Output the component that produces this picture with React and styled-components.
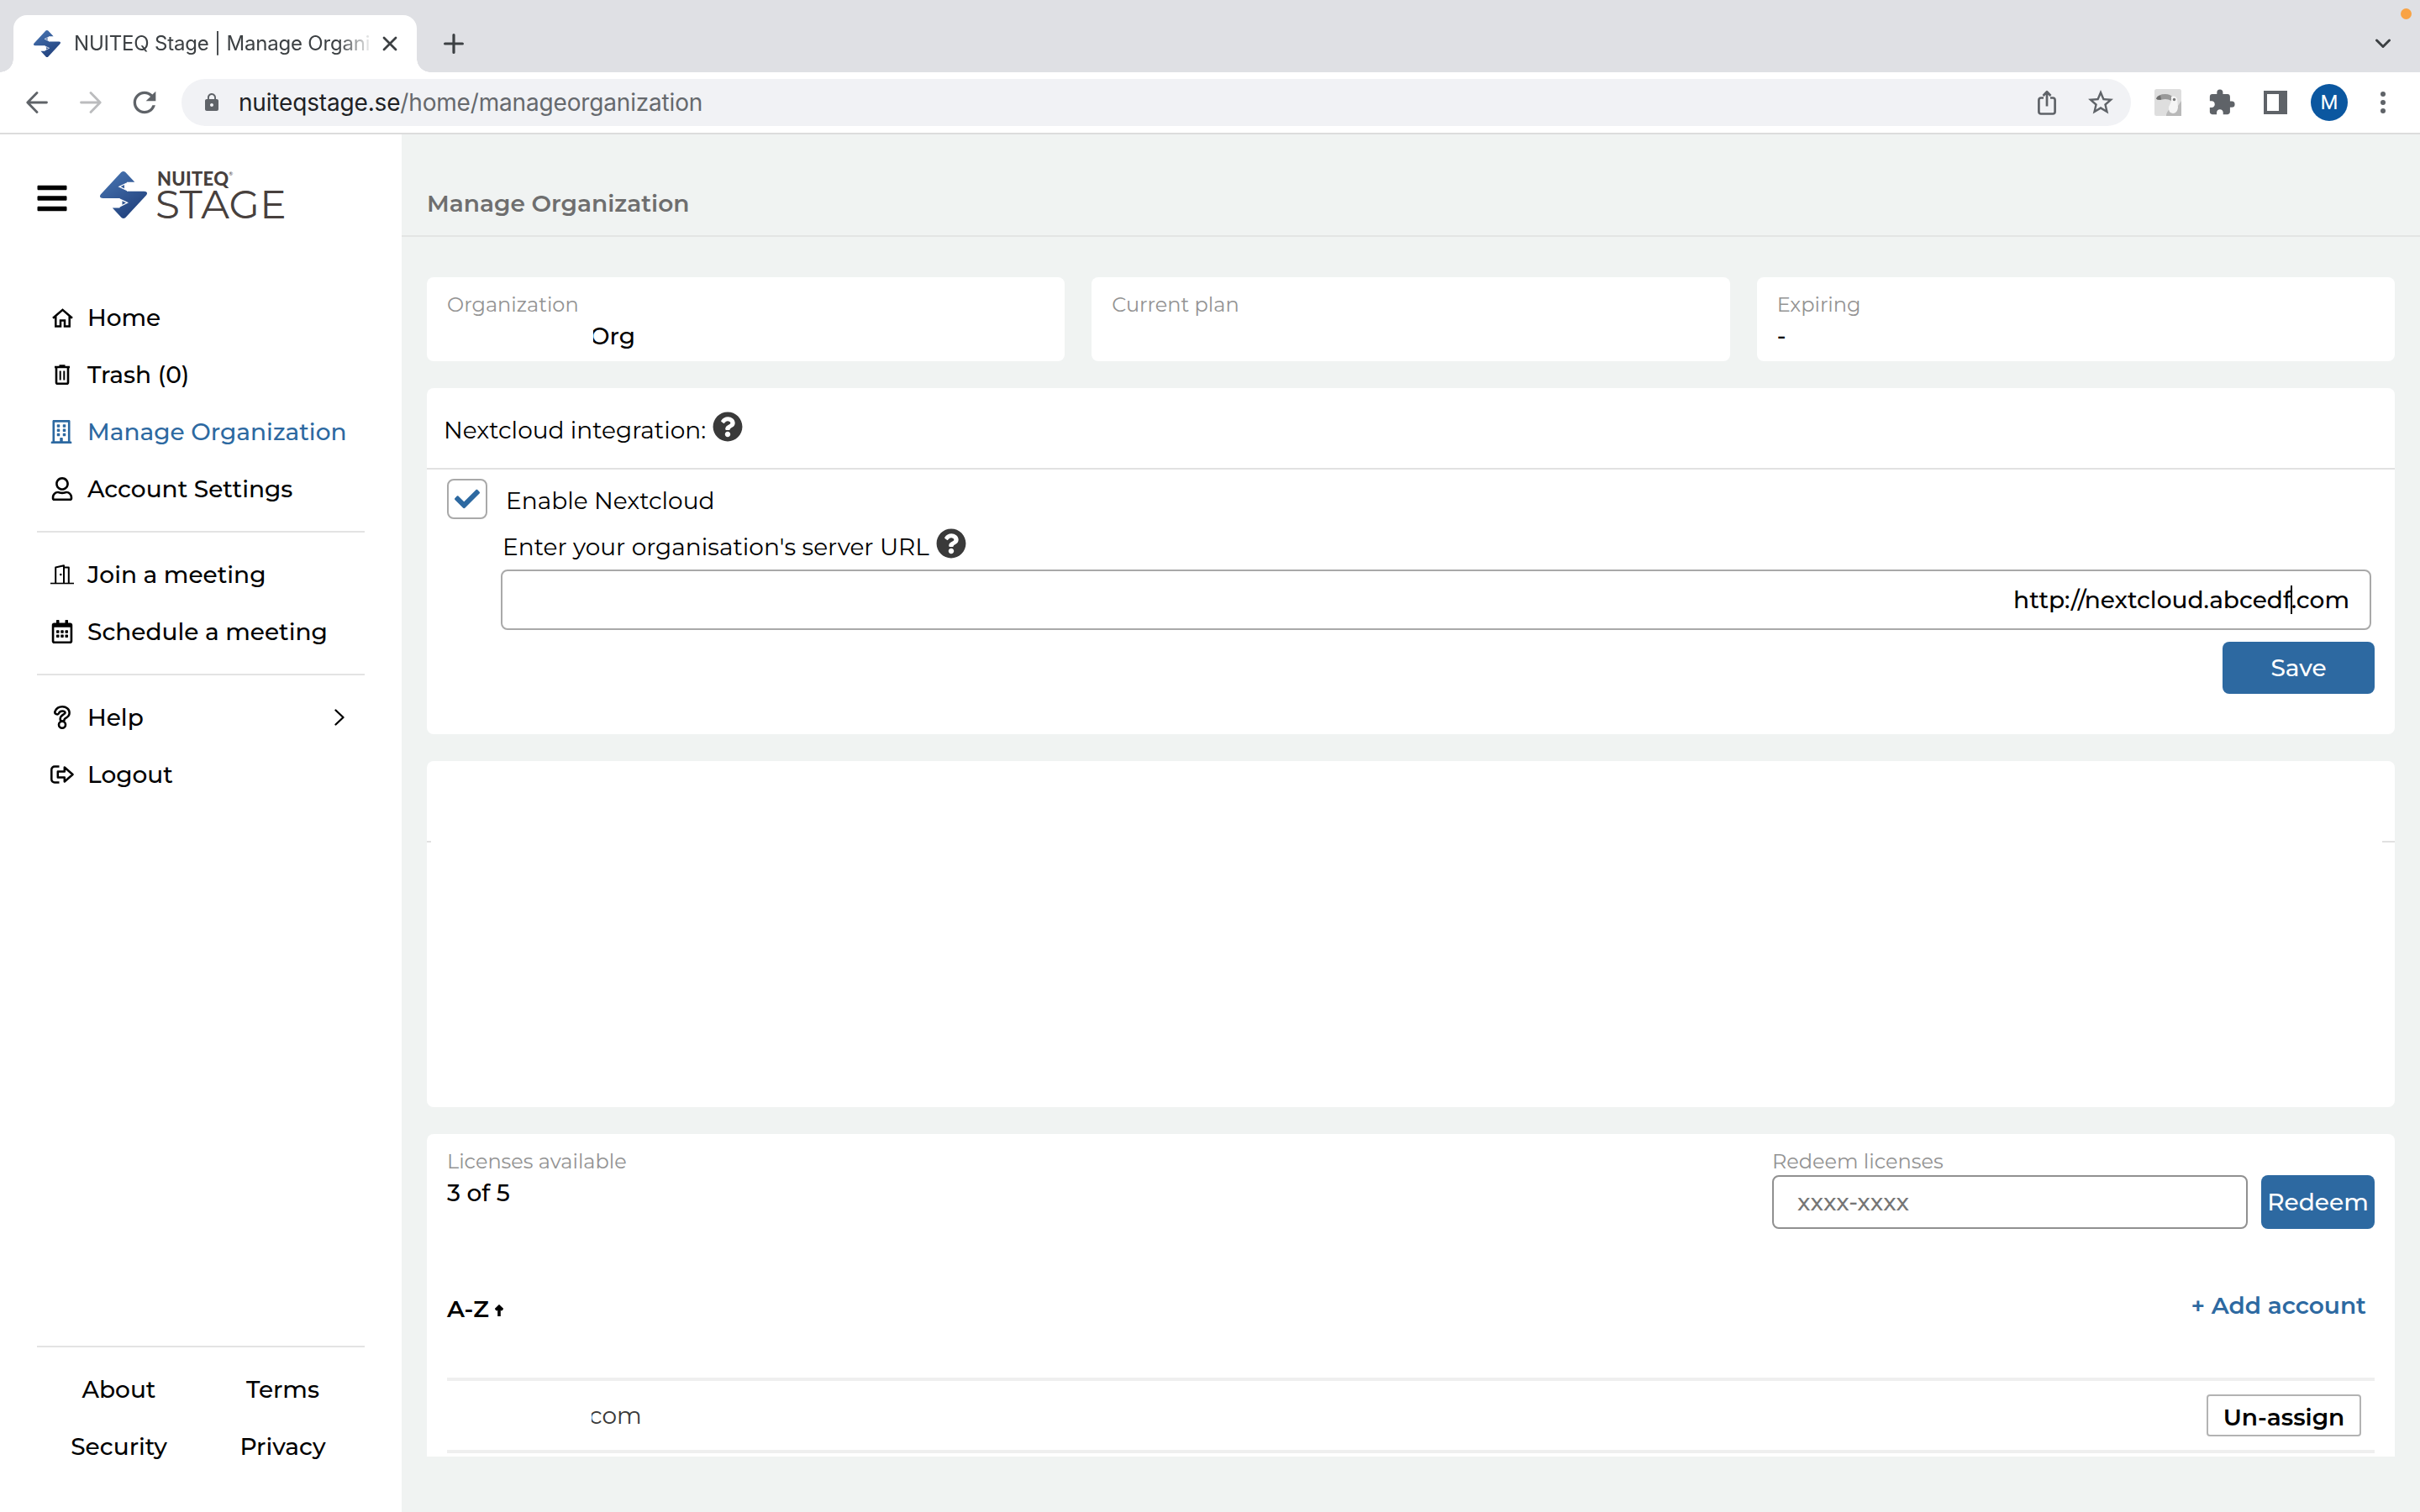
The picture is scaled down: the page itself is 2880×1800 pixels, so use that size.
import styled, {createGlobalStyle, css} from "styled-components";
import {FaBars, FaCheck, FaQuestionCircle, FaRegBuilding, FaRegCalendarAlt, FaRegUser} from "react-icons/fa";
import {MdExtension, MdLock, MdRefresh, MdStarBorder} from "react-icons/md";

const GlobalStyle = createGlobalStyle`
  * {
    box-sizing: border-box;
  }

  body {
    margin: 0;
    background: #f0f3f2;
    color: #000;
    font: 500 28px/40px Montserrat, "Open Sans", sans-serif;
  }

  svg {
    display: block;
    flex: none;
  }
`;

/* ---------- browser chrome ---------- */

const Chrome = styled.header`
  height: 160px;
  background: #fff;
  border-bottom: 2px solid #dcdcdc;
  font-family: Inter, Roboto, sans-serif;
  font-weight: 400;
`;

const TabStrip = styled.div`
  position: relative;
  display: flex;
  align-items: flex-end;
  height: 86px;
  padding-left: 16px;
  background: #dfe0e4;
`;

const Tab = styled.div`
  position: relative;
  display: flex;
  align-items: center;
  width: 480px;
  height: 68px;
  padding: 0 22px 0 24px;
  border-radius: 16px 16px 0 0;
  background: #fff;

  &::before,
  &::after {
    content: "";
    position: absolute;
    bottom: 0;
    width: 16px;
    height: 16px;
  }

  &::before {
    left: -16px;
    background: radial-gradient(circle at 0 0, transparent 15.5px, #fff 16px);
  }

  &::after {
    right: -16px;
    background: radial-gradient(circle at 100% 0, transparent 15.5px, #fff 16px);
  }
`;

const TabTitle = styled.div`
  width: 352px;
  margin: 0 15px 0 16px;
  overflow: hidden;
  white-space: nowrap;
  font-size: 24px;
  letter-spacing: -0.2px;
  color: #3c4043;
  mask-image: linear-gradient(to right, #000 315px, transparent 356px);
`;

const NewTab = styled.div`
  margin: 0 0 22px 32px;
`;

const TabSearch = styled.div`
  margin: 0 35px 28px auto;
`;

const RecordingDot = styled.div`
  position: absolute;
  top: 10px;
  right: 10px;
  width: 13px;
  height: 13px;
  border-radius: 50%;
  background: #f9a344;
`;

const Toolbar = styled.div`
  display: flex;
  align-items: center;
  height: 72px;
  color: #5f6368;
`;

const NavButtons = styled.div`
  display: flex;
  align-items: center;
  width: 216px;
  padding-left: 31px;
  gap: 38px;

  svg:last-child {
    margin-left: -7px;
  }
`;

const AddressBar = styled.div`
  display: flex;
  align-items: center;
  width: 2320px;
  height: 56px;
  padding: 0 18px 0 24px;
  border-radius: 28px;
  background: #f1f2f5;
`;

const Url = styled.div`
  flex: 1;
  margin-left: 20px;
  letter-spacing: -0.17px;
  color: #66696d;

  b {
    font-weight: 400;
    color: #202124;
  }
`;

const ShareIcon = styled.svg`
  margin-right: 35px;
`;

const Extensions = styled.div`
  display: flex;
  align-items: center;
  flex: 1;
  padding-left: 28px;
`;

const PuzzleIcon = styled(MdExtension)`
  margin: 0 33px 0 31px;
`;

const Avatar = styled.div`
  width: 44px;
  height: 44px;
  margin: 0 39px 0 28px;
  border-radius: 50%;
  background: #0b57a0;
  color: #fff;
  font: 400 24px/45px Roboto, sans-serif;
  text-align: center;
`;

/* ---------- page ---------- */

const Page = styled.div`
  display: flex;
  height: 1640px;
`;

const Sidebar = styled.aside`
  display: flex;
  flex-direction: column;
  width: 478px;
  padding: 0 44px 44px;
  background: #fff;
`;

const Brand = styled.div`
  display: flex;
  height: 184px;
  padding-top: 44px;
`;

const MenuIcon = styled(FaBars)`
  margin: 12px 37px 0 -2px;
`;

const Wordmark = styled.div`
  margin-left: 12px;
  color: #47403d;
`;

const WordmarkTop = styled.div`
  display: flex;
  height: 20px;
  font: 900 22px/18px Lato, sans-serif;
  letter-spacing: 0.3px;

  sup {
    margin-top: -5px;
    font: 400 6px/16px Lato, sans-serif;
  }
`;

const WordmarkBottom = styled.div`
  margin-left: -2px;
  font-size: 47px;
  font-weight: 400;
  line-height: 40px;
  letter-spacing: 0.2px;
`;

const NavItem = styled.a`
  display: flex;
  align-items: center;
  height: 68px;
  padding: 0 24px 0 16px;
  white-space: nowrap;
  color: ${p => (p.$active ? "#2d69a1" : "#000")};
`;

const NavIcon = styled.span`
  display: flex;
  justify-content: center;
  flex: none;
  width: 28px;
  margin-right: 16px;
  ${p => p.$shift && css`padding-right: 3px;`}
`;

const NavLabel = styled.span`
  flex: 1;
`;

const Divider = styled.div`
  height: 2px;
  margin: 16px 0;
  background: #e3e3e3;
`;

const Legal = styled.div`
  margin-top: auto;
`;

const LegalLinks = styled.div`
  display: grid;
  grid-template-columns: 1fr 1fr;
  grid-auto-rows: 68px;
  align-items: center;
  text-align: center;
`;

const Main = styled.main`
  flex: 1;
`;

const TitleBar = styled.div`
  display: flex;
  align-items: center;
  height: 122px;
  padding: 43px 30px 0;
  border-bottom: 2px solid #e3e5e4;
  color: #6e6e6e;
  font-weight: 600;
`;

const Content = styled.div`
  display: flex;
  flex-direction: column;
  gap: 32px;
  padding: 48px 30px 0;
`;

const Cards = styled.div`
  display: grid;
  grid-template-columns: repeat(3, 1fr);
  gap: 32px;
`;

const Card = styled.section`
  height: 100px;
  padding: 16px 24px 0;
  border-radius: 8px;
  background: #fff;
`;

const Caption = styled.div`
  font-size: 24px;
  font-weight: 400;
  line-height: 34px;
  color: #939393;
`;

/* the start of the value is blanked out */
const Clipped = styled.div`
  width: 80px;
  margin-left: ${p => p.$from}px;
  overflow: hidden;
  text-indent: ${p => p.$indent}px;
`;

const Panel = styled.section`
  height: 412px;
  border-radius: 8px;
  background: #fff;
`;

const PanelHeader = styled.div`
  display: flex;
  align-items: center;
  height: 97px;
  padding-left: 20px;
  border-bottom: 2px solid #e1e1e1;
  font-weight: 400;
`;

const HelpIcon = styled(FaQuestionCircle).attrs({size: 36, color: "#3a3a3a"})`
  margin: 0 0 ${p => p.$lift}px 8px;
`;

const HeaderText = styled.span`
  margin-top: 5px;
`;

const CheckRow = styled.label`
  display: flex;
  gap: 22px;
  padding: 11px 24px 0;
  font-weight: 400;

  span {
    padding-top: 6px;
  }
`;

const CheckBox = styled.div`
  display: flex;
  align-items: center;
  justify-content: center;
  width: 48px;
  height: 48px;
  border: 2px solid #a9a9a9;
  border-radius: 8px;
  color: #2d69a1;
`;

const UrlLabel = styled.div`
  display: flex;
  align-items: center;
  height: 60px;
  padding-left: 90px;
  font-weight: 400;

  span {
    margin-top: 6px;
  }
`;

const Field = styled.div`
  display: flex;
  align-items: center;
  border: 2px solid #a9a9a9;
  border-radius: 8px;
`;

const UrlField = styled(Field)`
  justify-content: flex-end;
  height: 72px;
  margin: 0 28px 0 88px;
  padding-right: 24px;
`;

const Caret = styled.i`
  width: 2px;
  height: 34px;
  margin: 0 -1px;
  background: #000;
`;

const Button = styled.button`
  display: block;
  width: ${p => p.$w}px;
  height: ${p => p.$h}px;
  padding: 0;
  border: 0;
  border-radius: 8px;
  background: #2d69a1;
  color: #fff;
  font: inherit;
`;

const SaveButton = styled(Button)`
  margin: 14px 24px 0 auto;
`;

/* only the two ends of the header rule are left */
const BlankHeader = styled.div`
  display: flex;
  justify-content: space-between;
  padding-top: 95px;

  i {
    width: 5px;
    height: 2px;
    background: #e1e1e1;
  }

  i + i {
    width: 15px;
  }
`;

const Licenses = styled.section`
  height: 384px;
  padding: 16px 24px 0;
  border-radius: 8px 8px 0 0;
  background: #fff;
`;

const LicensesTop = styled.div`
  display: flex;
  justify-content: space-between;
  height: 97px;
`;

const RedeemCaption = styled(Caption)`
  margin-left: 1px;
`;

const RedeemRow = styled.div`
  display: flex;
  gap: 16px;
  margin: -1px 0 0 1px;
`;

const CodeField = styled(Field)`
  width: 566px;
  height: 64px;
  padding-left: 28px;
  border-color: #909090;
  color: #757575;
`;

const SortRow = styled.div`
  display: flex;
  align-items: center;
  justify-content: space-between;
  height: 177px;
  font-weight: 600;
`;

const Sort = styled.div`
  display: flex;
  align-items: center;
  gap: 7px;
  padding-top: 13px;

  svg {
    margin-top: 4px;
  }
`;

const AddAccount = styled.a`
  padding: 5px 10px 0 0;
  color: #2d69a1;
`;

const AccountRow = styled.div`
  display: flex;
  align-items: center;
  justify-content: space-between;
  height: 90px;
  border: solid #efefef;
  border-width: 4px 0;
  color: #3a3a3a;
  font-weight: 400;
`;

const UnassignButton = styled.button`
  width: 184px;
  height: 50px;
  margin-right: 16px;
  padding: 4px 0 0;
  border: 2px solid #b3b3b3;
  border-radius: 4px;
  background: #fff;
  color: #000;
  font: inherit;
  font-weight: 600;
`;

/* ---------- drawings ---------- */

const LogoMark = ({size}) => (
  <svg width={size} height={size} viewBox="0 0 56 56">
    <defs>
      <linearGradient id="mark" x1="0" y1="0" x2="0.6" y2="1">
        <stop offset="0" stopColor="#4a78b5"/>
        <stop offset="1" stopColor="#23437f"/>
      </linearGradient>
    </defs>
    <path
      fill="url(#mark)"
      d="M25.3 1Q27.8-.9 30.3 1L41.3 12.7H32V23.7H52.500Q58 24.200 55 28.500L30.400 55Q28 56.900 25.500 55L14.800 43.500H23.500V32H3.500Q-2 31.500 1 27.200Z"
    />
    <path fill="none" stroke="#fff" strokeWidth="1.300" d="M33 13.500L23 18.200 33 23M22.500 32.700L32.500 37.300 22.500 42.500"/>
    <path fill="#fff" d="M33 13.500l-4 1.900v5.300l4 2.300zM22.500 32.700l4 1.900v5.700l-4 2.200z"/>
  </svg>
);

const Line = ({w, h, sw = 2.6, children, ...rest}) => (
  <svg
    width={w}
    height={h}
    viewBox={`0 0 ${w} ${h}`}
    fill="none"
    stroke="currentColor"
    strokeWidth={sw}
    strokeLinejoin="round"
    {...rest}
  >
    {children}
  </svg>
);

const HomeIcon = () => (
  <Line w={25} h={23} sw={2.5} strokeLinejoin="miter">
    <path d="M1 11.800L12.500 1.800 24 11.800M4.300 9.500v12h5.700v-7h5v7h5.700v-12"/>
  </Line>
);

const TrashIcon = () => (
  <Line w={18} h={24}>
    <path d="M0 3h18M5.500 1.500h7M2 3v18.200q0 1.500 1.500 1.500h11q1.500 0 1.500-1.500V3"/>
    <path strokeWidth="2" d="M6.700 7.500v11M11.300 7.500v11"/>
  </Line>
);

const DoorIcon = () => (
  <Line w={28} h={24} sw={2}>
    <path d="M0 22.500h28" strokeWidth="1.600"/>
    <path d="M6.200 22V3.500L16 1.200V22M16 3.500h5.800V22"/>
    <circle cx="12.300" cy="12" r="1.300" fill="currentColor" stroke="none"/>
  </Line>
);

const QuestionIcon = () => (
  <Line w={20} h={28} strokeLinecap="round">
    <path strokeWidth="7.600" d="M3.900 7.800C5.200 4.700 7.400 3.900 10.300 3.900c3.400 0 5.800 1.800 5.800 4.800 0 4-5.900 3.800-5.900 7.300"/>
    <path stroke="#fff" strokeWidth="2.600" d="M3.900 7.800C5.200 4.700 7.400 3.900 10.300 3.900c3.400 0 5.800 1.800 5.800 4.800 0 4-5.900 3.800-5.900 7.300"/>
    <circle cx="10" cy="22.700" r="4" fill="#fff"/>
  </Line>
);

const LogoutIcon = () => (
  <Line w={28} h={22} sw={2.5}>
    <path d="M10.500 1.600H5A3.700 3.700 0 0 0 1.300 5.300v11.400A3.700 3.700 0 0 0 5 20.400h5.500"/>
    <path d="M8.800 7.600h8V2.500l9.700 8.500-9.700 8.500v-5.100h-8z"/>
  </Line>
);

const Toucan = () => (
  <svg width="32" height="32" viewBox="0 0 32 32">
    <rect width="32" height="32" rx="2.500" fill="#dedede"/>
    <path fill="#b9b9b9" d="M14 32q0-5 5-9l9-3 4-6v18z"/>
    <path fill="#999" d="M2 11.500Q4 6 13 6q6 0 8.500 3.500L20 14q-5-3-11-1.500-5 1.500-7-1z"/>
    <path fill="#6f6f6f" d="M2 11.500Q3.500 8 7 7.500l1 5Q4 13.500 2 11.500z"/>
    <path fill="#f5f5f5" d="M20 9q5-2 7 3l1 10q-1 7-6 7-6-1-5-8 3-5 3-8z"/>
    <circle cx="23.500" cy="12.500" r="1.700" fill="#777"/>
  </svg>
);

const menu = [
  [
    {label: "Home", icon: <HomeIcon/>},
    {label: "Trash (0)", icon: <TrashIcon/>},
    {label: "Manage Organization", icon: <FaRegBuilding size={28}/>, active: true},
    {label: "Account Settings", icon: <FaRegUser size={28}/>},
  ],
  [
    {label: "Join a meeting", icon: <DoorIcon/>},
    {label: "Schedule a meeting", icon: <FaRegCalendarAlt size={28}/>},
  ],
  [
    {label: "Help", icon: <QuestionIcon/>, more: true},
    {label: "Logout", icon: <LogoutIcon/>},
  ],
];

const BrowserChrome = () => (
  <Chrome>
    <TabStrip>
      <Tab>
        <LogoMark size={32}/>
        <TabTitle>NUITEQ Stage | Manage Organi</TabTitle>
        <Line w={18} h={18} sw={2.8} color="#3c4043" strokeLinecap="round">
          <path d="M2 2l14 14M16 2L2 16"/>
        </Line>
      </Tab>
      <NewTab>
        <Line w={24} h={24} sw={3.2} color="#3c4043" strokeLinecap="round">
          <path d="M12 1.600v20.800M1.600 12h20.800"/>
        </Line>
      </NewTab>
      <TabSearch>
        <Line w={18} h={12} sw={3} color="#3c4043" strokeLinecap="round">
          <path d="M1.500 2L9 9.500 16.500 2"/>
        </Line>
      </TabSearch>
      <RecordingDot/>
    </TabStrip>
    <Toolbar>
      <NavButtons>
        <Line w={26} h={26} sw={2.8} strokeLinecap="round">
          <path d="M24.500 13H2M13 1.500L1.800 13 13 24.500"/>
        </Line>
        <Line w={26} h={26} sw={2.8} color="#bbbcbe" strokeLinecap="round">
          <path d="M1.500 13H24M13 1.500L24.200 13 13 24.500"/>
        </Line>
        <MdRefresh size={40}/>
      </NavButtons>
      <AddressBar>
        <MdLock size={24}/>
        <Url><b>nuiteqstage.se</b>/home/manageorganization</Url>
        <ShareIcon as={Line} w={22} h={30} sw={2.700}>
          <path d="M7 9.500H4A2.600 2.600 0 0 0 1.400 12v14A2.600 2.600 0 0 0 4 28.500h14a2.600 2.600 0 0 0 2.600-2.500V12A2.600 2.600 0 0 0 18 9.500h-3M11 19.500V2.500M6.500 7L11 2.300 15.500 7"/>
        </ShareIcon>
        <MdStarBorder size={36}/>
      </AddressBar>
      <Extensions>
        <Toucan/>
        <PuzzleIcon size={34}/>
        <svg width="28" height="28" viewBox="0 0 28 28" fill="currentColor">
          <path fillRule="evenodd" d="M0 0h28v28H0zM4 4v20h14V4z"/>
        </svg>
        <Avatar>M</Avatar>
        <svg width="6" height="26" viewBox="0 0 6 26" fill="currentColor">
          <circle cx="3" cy="3" r="3"/>
          <circle cx="3" cy="13" r="3"/>
          <circle cx="3" cy="23" r="3"/>
        </svg>
      </Extensions>
    </Toolbar>
  </Chrome>
);

const SideMenu = () => (
  <Sidebar>
    <Brand>
      <MenuIcon size={40}/>
      <LogoMark size={56}/>
      <Wordmark>
        <WordmarkTop>NUITEQ<sup>®</sup></WordmarkTop>
        <WordmarkBottom>STAGE</WordmarkBottom>
      </Wordmark>
    </Brand>
    {menu.map((group, i) => (
      <div key={i}>
        {i > 0 && <Divider/>}
        {group.map(({label, icon, active, more}) => (
          <NavItem key={label} $active={active}>
            <NavIcon $shift={active}>{icon}</NavIcon>
            <NavLabel>{label}</NavLabel>
            {more && (
              <Line w={12} h={20} sw={2.3} strokeLinecap="round">
                <path d="M1.500 1.500L10.500 10l-9 8.500"/>
              </Line>
            )}
          </NavItem>
        ))}
      </div>
    ))}
    <Legal>
      <Divider/>
      <LegalLinks>
        <a>About</a>
        <a>Terms</a>
        <a>Security</a>
        <a>Privacy</a>
      </LegalLinks>
    </Legal>
  </Sidebar>
);

const App = () => {
  return (
    <>
      <GlobalStyle/>
      <BrowserChrome/>
      <Page>
        <SideMenu/>
        <Main>
          <TitleBar>Manage Organization</TitleBar>
          <Content>
            <Cards>
              <Card>
                <Caption>Organization</Caption>
                <Clipped $from={174} $indent={-4}>Org</Clipped>
              </Card>
              <Card>
                <Caption>Current plan</Caption>
              </Card>
              <Card>
                <Caption>Expiring</Caption>
                -
              </Card>
            </Cards>

            <Panel>
              <PanelHeader>
                <HeaderText>Nextcloud integration:</HeaderText>
                <HelpIcon $lift={3}/>
              </PanelHeader>
              <CheckRow>
                <CheckBox><FaCheck size={30}/></CheckBox>
                <span>Enable Nextcloud</span>
              </CheckRow>
              <UrlLabel>
                <span>Enter your organisation's server URL</span>
                <HelpIcon $lift={2}/>
              </UrlLabel>
              <UrlField>http://nextcloud.abcedf<Caret/>.com</UrlField>
              <SaveButton $w={181} $h={62}>Save</SaveButton>
            </Panel>

            <Panel>
              <BlankHeader><i/><i/></BlankHeader>
            </Panel>

            <Licenses>
              <LicensesTop>
                <div>
                  <Caption>Licenses available</Caption>
                  3 of 5
                </div>
                <div>
                  <RedeemCaption>Redeem licenses</RedeemCaption>
                  <RedeemRow>
                    <CodeField>xxxx-xxxx</CodeField>
                    <Button $w={135} $h={64}>Redeem</Button>
                  </RedeemRow>
                </div>
              </LicensesTop>
              <SortRow>
                <Sort>
                  A-Z
                  <Line w={10} h={14} sw={3.6}>
                    <path d="M5 14V3M.8 6.400L5 2.400l4.200 4" strokeLinejoin="miter"/>
                  </Line>
                </Sort>
                <AddAccount>+ Add account</AddAccount>
              </SortRow>
              <AccountRow>
                <Clipped $from={172} $indent={-3}>com</Clipped>
                <UnassignButton>Un-assign</UnassignButton>
              </AccountRow>
            </Licenses>
          </Content>
        </Main>
      </Page>
    </>
  );
};

export default App;
